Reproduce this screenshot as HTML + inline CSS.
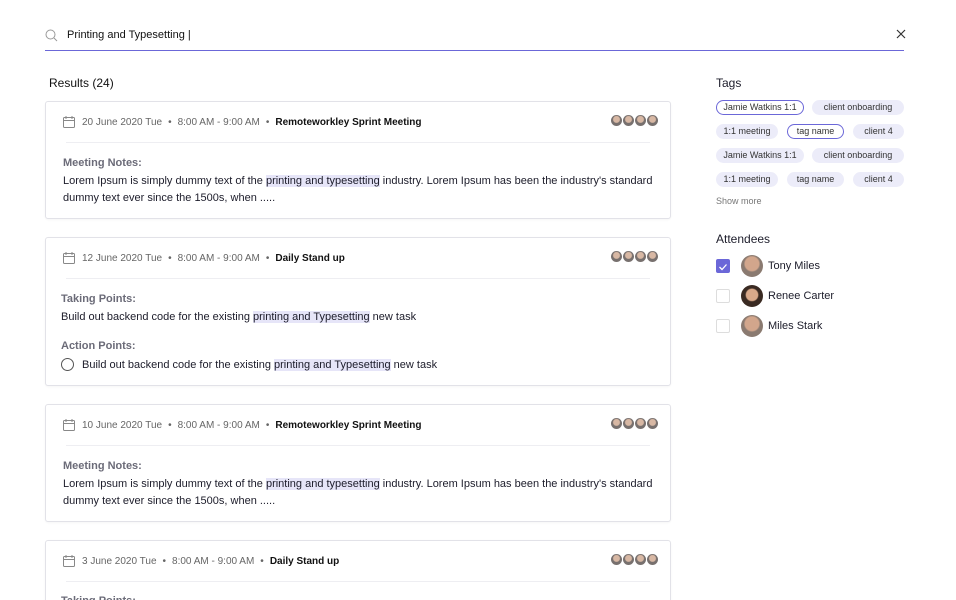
<!DOCTYPE html>
<html><head><style>
*{box-sizing:border-box;margin:0;padding:0}
html,body{width:956px;height:600px;overflow:hidden}
body{background:#fff;font-family:"Liberation Sans",sans-serif;color:#1c1c2a;position:relative}
.abs{position:absolute}
.search{left:45px;top:22px;width:859px;height:29px;border-bottom:1.5px solid #6b67d8}
.card{position:absolute;left:45px;width:626px;border:1px solid #e2e2e8;border-radius:3px;background:#fff;box-shadow:0 1px 2px rgba(0,0,0,.04)}
.hd{position:absolute;left:17px;top:0;height:40px;display:flex;align-items:center;font-size:10px;color:#666}
.hd b{color:#111;font-weight:bold}
.hd .dot{margin:0 6px}
.line{position:absolute;left:20px;right:20px;top:40px;border-top:1px solid #eeeef2}
.lbl{position:absolute;left:17px;font-size:11px;color:#6b6b78;font-weight:bold}
.txt{position:absolute;left:17px;font-size:11px;color:#1c1c2a;line-height:17px}
.hl{background:#e6e5f8}
.av{position:absolute;right:12px;top:13px;display:flex}
.av i{width:11px;height:11px;border-radius:50%;margin-left:1px;display:block;background:radial-gradient(circle at 50% 40%,#d8b8a4 35%,#77706e 45%)}
.tag{position:absolute;height:15px;border-radius:8px;background:#ececf9;font-size:9px;line-height:15px;text-align:center;color:#333}
.tag.o{background:#fff;border:1px solid #6b67d8;line-height:13px}
.cb{position:absolute;left:716px;width:14px;height:14px;border:1px solid #ddd;border-radius:2px}
.pa{position:absolute;left:741px;width:22px;height:22px;border-radius:50%;background:radial-gradient(circle at 50% 40%,#d2a68c 40%,#8a7a70 48%)}
.nm{position:absolute;left:768px;font-size:11px}
</style></head><body>
<div class="abs search">
<svg class="abs" style="left:0;top:7px" width="13" height="13" viewBox="0 0 13 13"><circle cx="5.5" cy="5.5" r="4.5" fill="none" stroke="#999" stroke-width="1"/><line x1="9" y1="9" x2="12" y2="12" stroke="#999"/></svg>
<div class="abs" style="left:22px;top:7px;font-size:11px;color:#111">Printing and Typesetting |</div>
<svg class="abs" style="left:851px;top:7px" width="10" height="10" viewBox="0 0 10 10"><path d="M1 1L9 9M9 1L1 9" stroke="#333" stroke-width="1.2"/></svg>
</div>
<div class="abs" style="left:49px;top:76px;font-size:12px;color:#111">Results (24)</div>

<div class="card" style="top:101px;height:118px">
<div class="hd"><svg width="12" height="12" viewBox="0 0 12 12" style="margin-right:7px"><rect x=".5" y="1.5" width="11" height="10" rx="1" fill="none" stroke="#888"/><line x1=".5" y1="4.5" x2="11.5" y2="4.5" stroke="#888"/><path d="M3 0v3M9 0v3" stroke="#888"/></svg>20 June 2020 Tue<span class="dot">•</span>8:00 AM - 9:00 AM<span class="dot">•</span><b>Remoteworkley Sprint Meeting</b></div>
<div class="av"><i></i><i></i><i></i><i></i></div><div class="line"></div>
<div class="lbl" style="top:55px">Meeting Notes:</div>
<div class="txt" style="top:71px">Lorem Ipsum is simply dummy text of the <span class="hl">printing and typesetting</span> industry. Lorem Ipsum has been the industry's standard<br>dummy text ever since the 1500s, when .....</div>
</div>

<div class="card" style="top:237px;height:149px">
<div class="hd"><svg width="12" height="12" viewBox="0 0 12 12" style="margin-right:7px"><rect x=".5" y="1.5" width="11" height="10" rx="1" fill="none" stroke="#888"/><line x1=".5" y1="4.5" x2="11.5" y2="4.5" stroke="#888"/><path d="M3 0v3M9 0v3" stroke="#888"/></svg>12 June 2020 Tue<span class="dot">•</span>8:00 AM - 9:00 AM<span class="dot">•</span><b>Daily Stand up</b></div>
<div class="av"><i></i><i></i><i></i><i></i></div><div class="line"></div>
<div class="lbl" style="top:55px;left:15px">Taking Points:</div>
<div class="txt" style="top:71px;left:15px">Build out backend code for the existing <span class="hl">printing and Typesetting</span> new task</div>
<div class="lbl" style="top:102px;left:15px">Action Points:</div>
<div class="abs" style="left:15px;top:120px;width:13px;height:13px;border:1px solid #555;border-radius:50%"></div>
<div class="txt" style="top:119px;left:36px">Build out backend code for the existing <span class="hl">printing and Typesetting</span> new task</div>
</div>

<div class="card" style="top:404px;height:118px">
<div class="hd"><svg width="12" height="12" viewBox="0 0 12 12" style="margin-right:7px"><rect x=".5" y="1.5" width="11" height="10" rx="1" fill="none" stroke="#888"/><line x1=".5" y1="4.5" x2="11.5" y2="4.5" stroke="#888"/><path d="M3 0v3M9 0v3" stroke="#888"/></svg>10 June 2020 Tue<span class="dot">•</span>8:00 AM - 9:00 AM<span class="dot">•</span><b>Remoteworkley Sprint Meeting</b></div>
<div class="av"><i></i><i></i><i></i><i></i></div><div class="line"></div>
<div class="lbl" style="top:55px">Meeting Notes:</div>
<div class="txt" style="top:71px">Lorem Ipsum is simply dummy text of the <span class="hl">printing and typesetting</span> industry. Lorem Ipsum has been the industry's standard<br>dummy text ever since the 1500s, when .....</div>
</div>

<div class="card" style="top:540px;height:80px">
<div class="hd"><svg width="12" height="12" viewBox="0 0 12 12" style="margin-right:7px"><rect x=".5" y="1.5" width="11" height="10" rx="1" fill="none" stroke="#888"/><line x1=".5" y1="4.5" x2="11.5" y2="4.5" stroke="#888"/><path d="M3 0v3M9 0v3" stroke="#888"/></svg>3 June 2020 Tue<span class="dot">•</span>8:00 AM - 9:00 AM<span class="dot">•</span><b>Daily Stand up</b></div>
<div class="av"><i></i><i></i><i></i><i></i></div><div class="line"></div>
<div class="lbl" style="top:54px;left:15px">Taking Points:</div>
</div>

<div class="abs" style="left:716px;top:76px;font-size:12px">Tags</div>
<div class="tag o" style="left:716px;top:100px;width:88px">Jamie Watkins 1:1</div>
<div class="tag" style="left:812px;top:100px;width:92px">client onboarding</div>
<div class="tag" style="left:716px;top:124px;width:62px">1:1 meeting</div>
<div class="tag o" style="left:787px;top:124px;width:57px">tag name</div>
<div class="tag" style="left:853px;top:124px;width:51px">client 4</div>
<div class="tag" style="left:716px;top:148px;width:88px">Jamie Watkins 1:1</div>
<div class="tag" style="left:812px;top:148px;width:92px">client onboarding</div>
<div class="tag" style="left:716px;top:172px;width:62px">1:1 meeting</div>
<div class="tag" style="left:787px;top:172px;width:57px">tag name</div>
<div class="tag" style="left:853px;top:172px;width:51px">client 4</div>
<div class="abs" style="left:716px;top:196px;font-size:9px;color:#777">Show more</div>
<div class="abs" style="left:716px;top:232px;font-size:12px">Attendees</div>
<div class="cb" style="top:259px;background:#6b67d8;border-color:#6b67d8"><svg width="12" height="12" viewBox="0 0 12 12"><path d="M2.5 6l2.5 2.5 4.5-5" stroke="#fff" stroke-width="1.3" fill="none"/></svg></div>
<div class="pa" style="top:255px"></div><div class="nm" style="top:260px">Tony Miles</div>
<div class="cb" style="top:289px"></div>
<div class="pa" style="top:285px;background:radial-gradient(circle at 50% 45%,#d9a98a 35%,#3a2a22 42%)"></div><div class="nm" style="top:290px">Renee Carter</div>
<div class="cb" style="top:319px"></div>
<div class="pa" style="top:315px"></div><div class="nm" style="top:320px">Miles Stark</div>
</body></html>
